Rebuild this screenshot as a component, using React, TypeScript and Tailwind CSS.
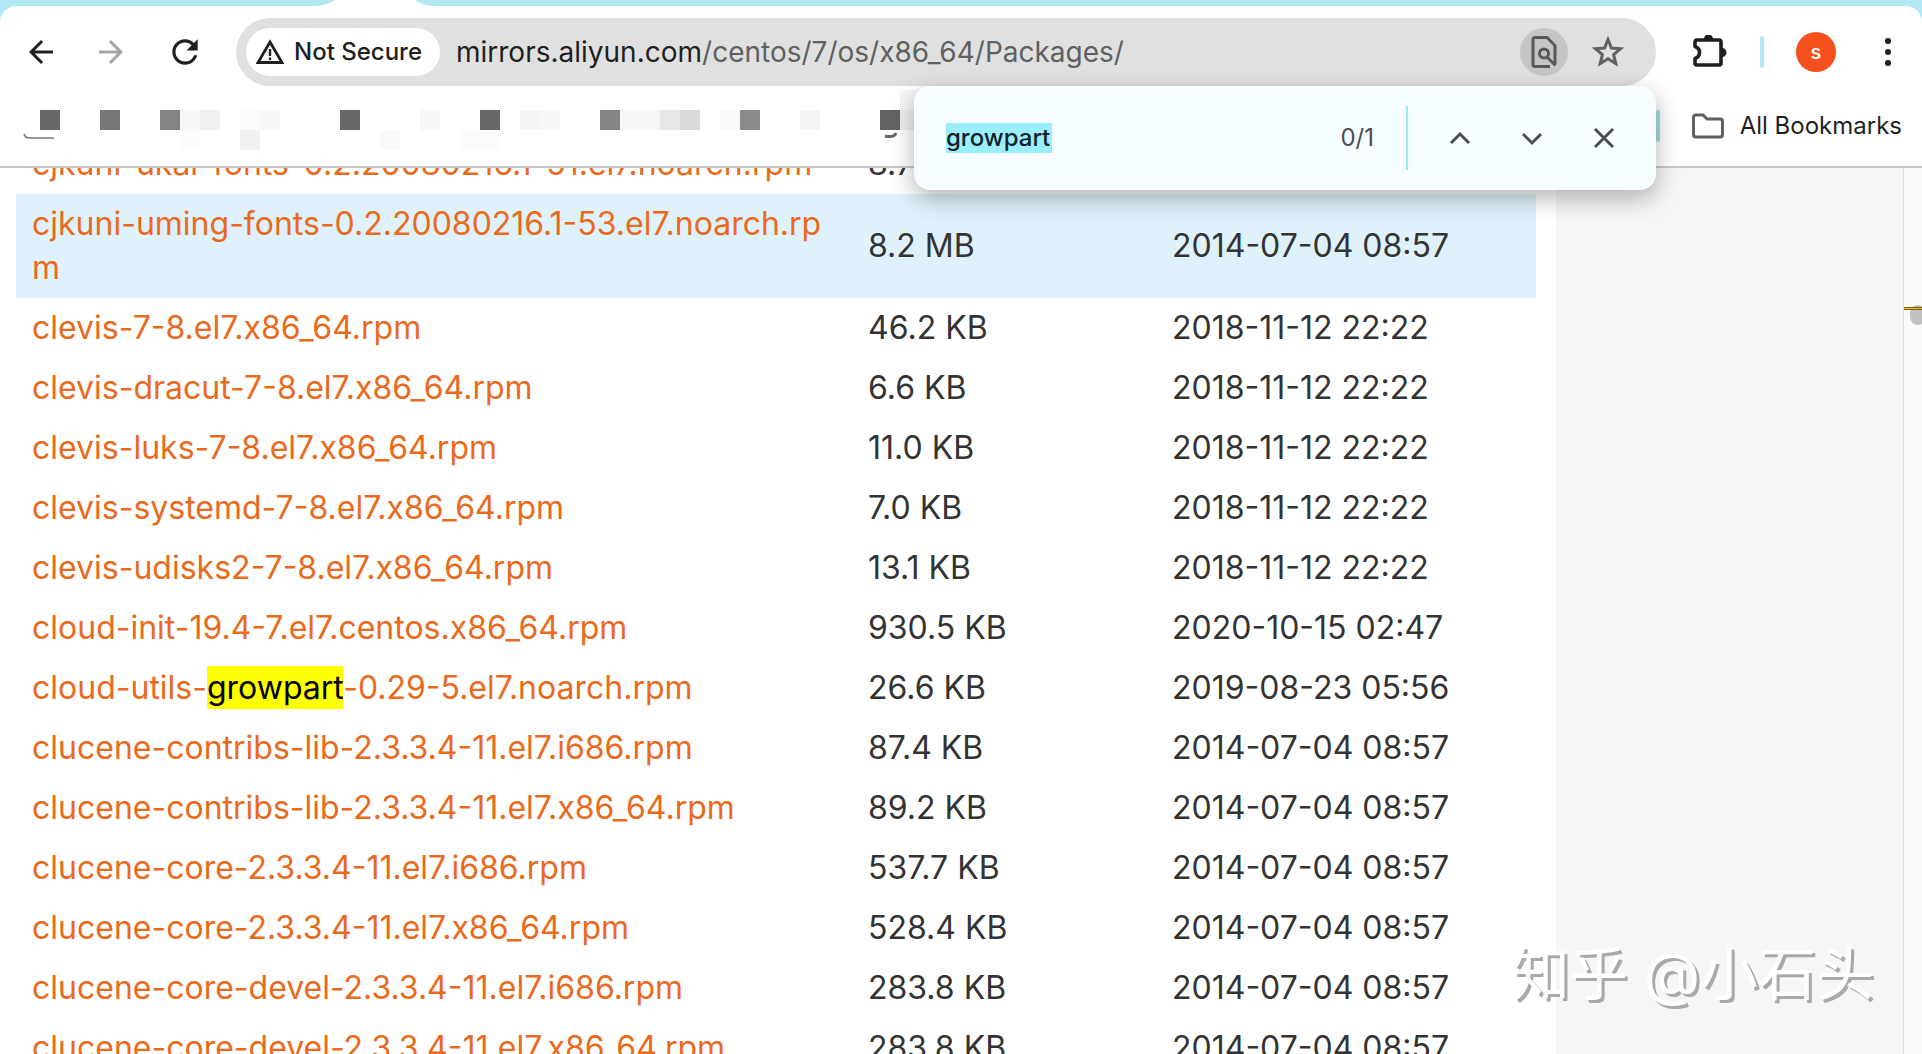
import React from "react";
import { MdArrowBack, MdArrowForward, MdRefresh } from "react-icons/md";

const packages = [
  { name: "cjkuni-ukai-fonts-0.2.20080216.1-51.el7.noarch.rpm", size: "8.7 MB", date: "2014-07-04 08:57", oneLine: true },
  { name: "cjkuni-uming-fonts-0.2.20080216.1-53.el7.noarch.rpm", size: "8.2 MB", date: "2014-07-04 08:57", hovered: true },
  { name: "clevis-7-8.el7.x86_64.rpm", size: "46.2 KB", date: "2018-11-12 22:22" },
  { name: "clevis-dracut-7-8.el7.x86_64.rpm", size: "6.6 KB", date: "2018-11-12 22:22" },
  { name: "clevis-luks-7-8.el7.x86_64.rpm", size: "11.0 KB", date: "2018-11-12 22:22" },
  { name: "clevis-systemd-7-8.el7.x86_64.rpm", size: "7.0 KB", date: "2018-11-12 22:22" },
  { name: "clevis-udisks2-7-8.el7.x86_64.rpm", size: "13.1 KB", date: "2018-11-12 22:22" },
  { name: "cloud-init-19.4-7.el7.centos.x86_64.rpm", size: "930.5 KB", date: "2020-10-15 02:47" },
  { name: "cloud-utils-growpart-0.29-5.el7.noarch.rpm", size: "26.6 KB", date: "2019-08-23 05:56" },
  { name: "clucene-contribs-lib-2.3.3.4-11.el7.i686.rpm", size: "87.4 KB", date: "2014-07-04 08:57" },
  { name: "clucene-contribs-lib-2.3.3.4-11.el7.x86_64.rpm", size: "89.2 KB", date: "2014-07-04 08:57" },
  { name: "clucene-core-2.3.3.4-11.el7.i686.rpm", size: "537.7 KB", date: "2014-07-04 08:57" },
  { name: "clucene-core-2.3.3.4-11.el7.x86_64.rpm", size: "528.4 KB", date: "2014-07-04 08:57" },
  { name: "clucene-core-devel-2.3.3.4-11.el7.i686.rpm", size: "283.8 KB", date: "2014-07-04 08:57" },
  { name: "clucene-core-devel-2.3.3.4-11.el7.x86_64.rpm", size: "283.8 KB", date: "2014-07-04 08:57" },
];

const query = "growpart";

/* Blurred-out bookmark tiles: x, y, width, fill */
const tiles: [number, number, number, string][] = [
  [40, 20, 20, "#666666"], [100, 20, 20, "#777777"], [160, 20, 20, "#848484"],
  [180, 20, 20, "#f8f8f8"], [200, 20, 20, "#f1f1f1"], [240, 20, 20, "#fcfcfc"],
  [260, 20, 20, "#f8f8f8"], [340, 20, 20, "#666666"], [420, 20, 20, "#f8f8f8"],
  [480, 20, 20, "#666666"], [520, 20, 20, "#f5f5f5"], [540, 20, 20, "#f8f8f8"],
  [600, 20, 20, "#858585"], [620, 20, 40, "#f7f7f7"], [660, 20, 20, "#e8e8e8"],
  [680, 20, 20, "#d9d9d9"], [720, 20, 20, "#fafafa"], [740, 20, 20, "#8a8a8a"],
  [800, 20, 20, "#f5f5f5"], [880, 20, 20, "#636363"], [900, 20, 20, "#efefef"],
  [900, 0, 20, "#f7f7f7"], [240, 40, 20, "#f1f1f1"], [380, 40, 20, "#f9f9f9"],
  [460, 40, 40, "#fbfbfb"], [180, 40, 20, "#fcfcfc"],
];

function Highlighted({ text }: { text: string }) {
  const at = text.indexOf(query);
  if (at < 0) return <>{text}</>;
  return (
    <>
      {text.slice(0, at)}
      <mark className="bg-[#ffff00] py-[2px] text-black">{query}</mark>
      {text.slice(at + query.length)}
    </>
  );
}

function TabStrip() {
  return (
    <div className="h-[22px] bg-[#b0e8f4]">
      <svg className="absolute h-[6px] w-[116px] translate-x-[316px]" viewBox="0 0 116 6" aria-hidden="true">
        <path d="M0 6 Q12 5 19 0 H99 Q106 5 116 6 Z" fill="#fff" />
      </svg>
    </div>
  );
}

function Toolbar() {
  return (
    <div className="relative z-10 -mt-4 flex h-20 items-start rounded-t-2xl bg-white pt-3 pr-3 text-[#1f1f1f]">
      <div className="flex h-[68px] w-[236px] shrink-0 items-center pl-5">
        <button aria-label="Back" className="flex w-[42px] justify-center"><MdArrowBack size={36} /></button>
        <button aria-label="Forward" className="ml-7 flex w-[42px] justify-center text-[#a5a5a5]"><MdArrowForward size={36} /></button>
        <button aria-label="Reload" className="ml-8 flex w-[42px] justify-center"><MdRefresh size={38} /></button>
      </div>
      <div className="flex h-[68px] min-w-0 flex-1 items-center rounded-full bg-[#e0e0e0] pr-8 pl-[10px]">
        <button className="flex h-12 w-[194px] shrink-0 items-center gap-[10px] rounded-full bg-white pl-[10px] text-[24px] font-medium whitespace-nowrap">
          <svg width="28" height="26" viewBox="0 0 28 26" fill="none" aria-hidden="true">
            <path d="M14 3 L26 23.5 H2 Z" stroke="currentColor" strokeWidth="2.8" />
            <path d="M14 10 V17 M14 18.5 V21" stroke="currentColor" strokeWidth="2.4" />
          </svg>
          Not Secure
        </button>
        <div className="ml-4 min-w-0 flex-1 text-[28px] whitespace-nowrap text-[#5f6062]">
          <span className="text-[#1f1f1f]">mirrors.aliyun.com</span>/centos/7/os/x86_64/Packages/
        </div>
        <button aria-label="Find in page" className="flex size-12 items-center justify-center rounded-full bg-[#c5c5c5] text-[#57585a]">
          <svg width="26" height="34" viewBox="0 0 26 34" fill="none" stroke="currentColor" strokeWidth="3" aria-hidden="true">
            <path d="M19 31.5 H4 Q2 31.5 2 29.500 V4.500 Q2 2.500 4 2.500 H16 L24 10.500 V29" />
            <circle cx="13" cy="18.500" r="4.500" />
            <path d="M16 22 L24.500 30.500" />
          </svg>
        </button>
        <button aria-label="Bookmark this page" className="ml-6 text-[#5f6062]">
          <svg width="32" height="32" viewBox="0 0 32 32" fill="none" stroke="currentColor" strokeWidth="3" aria-hidden="true">
            <path d="M16 3.500 L19.400 12 L28.600 12.700 L21.600 18.600 L23.800 27.600 L16 22.800 L8.200 27.600 L10.400 18.600 L3.400 12.700 L12.600 12 Z" />
          </svg>
        </button>
      </div>
      <div className="flex h-[68px] w-[254px] shrink-0 items-center pl-9">
        <button aria-label="Extensions">
          <svg width="36" height="34" viewBox="0 0 36 34" fill="none" aria-hidden="true">
            <path
              d="M5 5 H27 Q29 5 29 7 V28 Q29 30 27 30 H5 Q3 30 3 28 V23.500 Q7.500 22 7.500 17.500 Q7.500 13 3 11.500 V7 Q3 5 5 5 Z"
              stroke="currentColor" strokeWidth="3.600" strokeLinejoin="round"
            />
            <path d="M12 4 A4.500 4.500 0 0 1 21 4 Z M30 13 A4.500 4.500 0 0 1 30 22 Z" fill="currentColor" />
          </svg>
        </button>
        <span className="ml-8 h-8 w-1 rounded-full bg-[#b7e9f5]" />
        <button aria-label="Profile" className="ml-8 flex size-10 items-center justify-center rounded-full bg-[#f4511e] text-[20px] font-medium text-white">s</button>
        <button aria-label="Menu" className="ml-12">
          <svg width="8" height="28" viewBox="0 0 8 28" fill="currentColor" aria-hidden="true">
            <circle cx="4" cy="3" r="3" /><circle cx="4" cy="14" r="3" /><circle cx="4" cy="25" r="3" />
          </svg>
        </button>
      </div>
    </div>
  );
}

function BookmarksBar() {
  return (
    <div className="flex h-[82px] items-start border-b-2 border-[#c8c8c8] bg-white pr-5">
      <svg className="mt-1 h-[64px] w-[920px] shrink-0" viewBox="0 0 920 64" aria-hidden="true">
        {tiles.map(([x, y, w, fill], i) => <rect key={i} x={x} y={y} width={w} height="20" fill={fill} />)}
        <path d="M24 44 Q25 48 30 48 H54" fill="none" stroke="#777" strokeWidth="1.500" />
        <path d="M885 46 Q894 48 896 43" fill="none" stroke="#666" strokeWidth="3" />
      </svg>
      <div className="ml-auto flex h-20 items-center">
        <span className="h-8 w-1 rounded-full bg-[#a9dde3]" />
        <button className="ml-8 flex items-center gap-4 text-[24px] whitespace-nowrap text-[#1f1f1f]">
          <svg width="32" height="26" viewBox="0 0 32 26" fill="none" aria-hidden="true">
            <path d="M4 2 H11 L15 6 H28 Q30.500 6 30.500 8.500 V21.500 Q30.500 24 28 24 H4 Q1.500 24 1.500 21.500 V4.500 Q1.500 2 4 2 Z" stroke="#5f6062" strokeWidth="3" />
          </svg>
          All Bookmarks
        </button>
      </div>
    </div>
  );
}

function FindBar() {
  return (
    <div className="absolute top-[86px] right-[266px] z-20 flex h-[104px] w-[742px] items-center rounded-2xl bg-[#f6feff] pr-8 pl-8 text-[#4a4d51] shadow-[0_8px_24px_rgba(0,0,0,0.3)]">
      <div className="relative min-w-0 flex-1">
        <span aria-hidden="true" className="absolute inset-y-0 left-0 w-[106px] bg-[#9aeffb]" />
        <input aria-label="Find in page" defaultValue={query} className="relative block h-[30px] w-full bg-transparent text-[24px] font-medium text-[#10222b] outline-none" />
      </div>
      <span className="text-[24px]">0/1</span>
      <span className="ml-8 h-16 w-[2px] bg-[#a3e7f5]" />
      <button aria-label="Previous match" className="ml-10">
        <svg width="24" height="24" viewBox="0 0 24 24" fill="none" stroke="currentColor" strokeWidth="3" aria-hidden="true"><path d="M3 17 L12 8 L21 17" /></svg>
      </button>
      <button aria-label="Next match" className="ml-12">
        <svg width="24" height="24" viewBox="0 0 24 24" fill="none" stroke="currentColor" strokeWidth="3" aria-hidden="true"><path d="M3 8 L12 17 L21 8" /></svg>
      </button>
      <button aria-label="Close find bar" className="mr-2 ml-12">
        <svg width="24" height="24" viewBox="0 0 24 24" fill="none" stroke="currentColor" strokeWidth="3" aria-hidden="true"><path d="M3 3 L21 21 M21 3 L3 21" /></svg>
      </button>
    </div>
  );
}

function PackageTable() {
  return (
    <table className="-mt-[34px] w-full table-fixed text-left text-[32px] leading-[44px]">
      <colgroup>
        <col className="w-[55%]" />
        <col className="w-[20%]" />
        <col className="w-[25%]" />
      </colgroup>
      <tbody>
        {packages.map((p) => (
          <tr key={p.name} className={p.hovered ? "bg-[#dff1fb]" : ""}>
            <td className={p.oneLine ? "px-4 py-2 whitespace-nowrap" : "px-4 py-2 break-all"}>
              <a href="#" className="text-[#ea6a1d]"><Highlighted text={p.name} /></a>
            </td>
            <td className="px-4 py-2 whitespace-nowrap text-[#333333]">{p.size}</td>
            <td className="px-4 py-2 whitespace-nowrap text-[#333333]">{p.date}</td>
          </tr>
        ))}
      </tbody>
    </table>
  );
}

export default function App() {
  return (
    <div className="relative flex h-screen flex-col overflow-hidden bg-white font-['Inter','Noto_Sans_CJK_SC',sans-serif]">
      <TabStrip />
      <Toolbar />
      <BookmarksBar />
      <FindBar />
      <main className="flex min-h-0 flex-1 overflow-hidden">
        <div className="min-w-0 flex-1 pr-5 pl-4">
          <PackageTable />
        </div>
        <aside className="w-[347px] shrink-0 bg-[#f6f6f6]" />
        <div className="flex w-[19px] shrink-0 flex-col items-end overflow-hidden border-l border-[#dddddd] bg-[#fafafa] pt-[137px]">
          <div className="-mr-1 h-5 w-4 rounded-full bg-[#c2c2c2]" />
          <div className="-mt-[18px] h-[3px] w-full border-y border-[#7d5b10] bg-[#e8bd3a]" />
        </div>
      </main>
      <div className="pointer-events-none absolute right-[48px] bottom-10 text-[58px] leading-[80px] whitespace-nowrap text-white [text-shadow:3px_3px_0_#a9a9a9]">
        知乎 @小石头
      </div>
    </div>
  );
}
